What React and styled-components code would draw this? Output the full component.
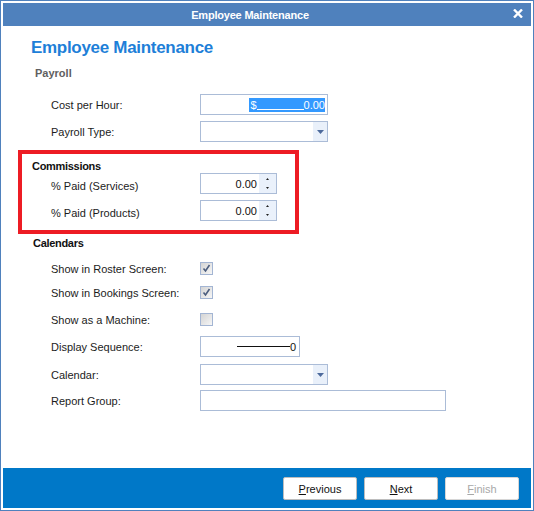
import styled, { createGlobalStyle } from "styled-components";

const GlobalStyle = createGlobalStyle`
  html, body {
    margin: 0;
    padding: 0;
    background: #fff;
  }
  body {
    font-family: "Liberation Sans", Arial, sans-serif;
  }
`;

export default function App() {
  return (
    <>
      <GlobalStyle />
      <Window>
        <TitleBar>
          <TitleText>Employee Maintenance</TitleText>
          <CloseBox>
            <svg width="10" height="9" viewBox="0 0 10 9">
              <path d="M1 0.5 L9 8.5 M9 0.5 L1 8.5" stroke="#fff" strokeWidth="2.4" />
            </svg>
          </CloseBox>
        </TitleBar>

        <Content>
          <Heading>Employee Maintenance</Heading>
          <SubHeading>Payroll</SubHeading>

          <Row $top={14}>
            <Label>Cost per Hour:</Label>
            <TextBox $w={128}>
              <Selected>
                $<Blank $w={47} />0.00
              </Selected>
            </TextBox>
          </Row>
          <Row>
            <Label>Payroll Type:</Label>
            <ComboBox $w={128} />
          </Row>

          <Highlight>
            <SectionTitle $indent={10}>Commissions</SectionTitle>
            <Row $top={0} $indent={29}>
              <Label $low>% Paid (Services)</Label>
              <SpinBox value="0.00" />
            </Row>
            <Row $indent={29}>
              <Label $low>% Paid (Products)</Label>
              <SpinBox value="0.00" />
            </Row>
          </Highlight>

          <SectionTitle $indent={30} $top={3}>Calendars</SectionTitle>
          <Row $top={8}>
            <Label>Show in Roster Screen:</Label>
            <CheckBox checked />
          </Row>
          <Row $top={3}>
            <Label>Show in Bookings Screen:</Label>
            <CheckBox checked />
          </Row>
          <Row>
            <Label>Show as a Machine:</Label>
            <CheckBox />
          </Row>
          <Row>
            <Label>Display Sequence:</Label>
            <TextBox $w={100} $pad={3}>
              <Blank $w={53} />0
            </TextBox>
          </Row>
          <Row $top={7}>
            <Label>Calendar:</Label>
            <ComboBox $w={128} />
          </Row>
          <Row $top={5}>
            <Label>Report Group:</Label>
            <TextBox $w={246} />
          </Row>
        </Content>

        <Footer>
          <Button>
            <u>P</u>revious
          </Button>
          <Button>
            <u>N</u>ext
          </Button>
          <Button disabled>
            <u>F</u>inish
          </Button>
        </Footer>
      </Window>
    </>
  );
}

function ComboBox({ $w }) {
  return (
    <Combo $w={$w}>
      <DropButton>
        <svg width="7" height="4" viewBox="0 0 7 4">
          <path d="M0 0 H7 L3.5 4 Z" fill="#4d6a9c" />
        </svg>
      </DropButton>
    </Combo>
  );
}

function SpinBox({ value }) {
  return (
    <Spin>
      <SpinValue>{value}</SpinValue>
      <SpinButtons>
        <SpinHalf>
          <svg width="3" height="2" viewBox="0 0 3 2">
            <path d="M1.5 0 L3 2 H0 Z" fill="#222" />
          </svg>
        </SpinHalf>
        <SpinHalf>
          <svg width="3" height="2" viewBox="0 0 3 2">
            <path d="M0 0 H3 L1.5 2 Z" fill="#222" />
          </svg>
        </SpinHalf>
      </SpinButtons>
    </Spin>
  );
}

function CheckBox({ checked }) {
  return (
    <Check>
      {checked && (
        <svg width="11" height="11" viewBox="0 0 11 11">
          <path d="M2.5 5.5 L4.5 8 L8.5 2" stroke="#4b5d7e" strokeWidth="1.6" fill="none" />
        </svg>
      )}
    </Check>
  );
}

const frameBlue = "#4f81bd";
const fieldBorder = "#abbcd7";
const footerBlue = "#0078c8";

const Window = styled.div`
  box-sizing: border-box;
  width: 534px;
  height: 511px;
  border: 1px solid ${frameBlue};
  padding: 2px;
  display: flex;
  flex-direction: column;
  background: #fff;
`;

const TitleBar = styled.div`
  display: flex;
  align-items: center;
  height: 23px;
  background: ${frameBlue};
  color: #fff;
`;

const TitleText = styled.div`
  flex: 1;
  text-align: center;
  font-size: 11px;
  font-weight: bold;
  letter-spacing: -0.2px;
`;

const CloseBox = styled.div`
  width: 34px;
  display: flex;
  justify-content: flex-end;
  padding-right: 8px;
  box-sizing: border-box;
  margin-top: -2px;
`;

const Content = styled.div`
  flex: 1;
  display: flex;
  flex-direction: column;
`;

const Heading = styled.div`
  margin: 11px 0 0 28px;
  font-size: 17px;
  line-height: 22px;
  font-weight: bold;
  letter-spacing: -0.3px;
  color: #1e7fd8;
`;

const SubHeading = styled.div`
  margin: 7px 0 0 32px;
  font-size: 11px;
  line-height: 14px;
  font-weight: bold;
  color: #5f5f5f;
`;

const SectionTitle = styled.div`
  margin: ${({ $top }) => $top ?? 0}px 0 0 ${({ $indent }) => $indent}px;
  font-size: 11px;
  line-height: 13px;
  font-weight: bold;
  letter-spacing: -0.3px;
  color: #111;
`;

const Highlight = styled.div`
  box-sizing: border-box;
  width: 281px;
  margin: 8px 0 0 15px;
  border: 4px solid #ed1c24;
  padding: 6px 0 9px;
`;

const Row = styled.div`
  display: flex;
  align-items: center;
  height: 21px;
  margin-top: ${({ $top }) => $top ?? 6}px;
  padding-left: ${({ $indent }) => $indent ?? 48}px;
`;

const Label = styled.div`
  width: 149px;
  flex-shrink: 0;
  font-size: 11px;
  padding-top: ${({ $low }) => ($low ? 4 : 1)}px;
  color: #1c1c1c;
`;

const TextBox = styled.div`
  box-sizing: border-box;
  width: ${({ $w }) => $w}px;
  height: 21px;
  border: 1px solid ${fieldBorder};
  background: #fff;
  display: flex;
  align-items: center;
  justify-content: flex-end;
  padding-right: ${({ $pad }) => $pad ?? 2}px;
  font-size: 11px;
  color: #111;
`;

const Selected = styled.span`
  background: #3399ff;
  color: #fff;
  line-height: 14px;
  padding: 0 0 0 1px;
`;

const Blank = styled.span`
  display: inline-block;
  width: ${({ $w }) => $w}px;
  height: 1px;
  background: currentColor;
  vertical-align: -1px;
`;

const Combo = styled.div`
  box-sizing: border-box;
  width: ${({ $w }) => $w}px;
  height: 21px;
  border: 1px solid ${fieldBorder};
  background: #fff;
  display: flex;
  justify-content: flex-end;
`;

const DropButton = styled.div`
  width: 14px;
  background: #e9f0fa;
  display: flex;
  align-items: center;
  justify-content: center;
  padding-top: 1px;
`;

const Spin = styled.div`
  box-sizing: border-box;
  width: 77px;
  height: 21px;
  border: 1px solid ${fieldBorder};
  background: #fff;
  display: flex;
`;

const SpinValue = styled.div`
  flex: 1;
  display: flex;
  align-items: center;
  justify-content: flex-end;
  font-size: 11px;
  color: #111;
  padding-right: 2px;
`;

const SpinButtons = styled.div`
  width: 17px;
  display: flex;
  flex-direction: column;
  background: #eaf1fb;
`;

const SpinHalf = styled.div`
  flex: 1;
  display: flex;
  align-items: center;
  justify-content: center;
`;

const Check = styled.div`
  box-sizing: border-box;
  width: 13px;
  height: 13px;
  border: 1px solid #a3b5d3;
  background: linear-gradient(135deg, #d4d4d4, #f6f6f6);
  display: flex;
  align-items: center;
  justify-content: center;
`;

const Footer = styled.div`
  height: 40px;
  flex-shrink: 0;
  background: ${footerBlue};
  display: flex;
  align-items: center;
  justify-content: flex-end;
  gap: 7px;
  padding-right: 12px;
`;

const Button = styled.button`
  box-sizing: border-box;
  width: 74px;
  height: 23px;
  border: 1px solid ${({ disabled }) => (disabled ? "#d6d6d6" : "#bdbdbd")};
  border-radius: 2px;
  background: #fff;
  font-family: "Liberation Sans", Arial, sans-serif;
  font-size: 11px;
  color: ${({ disabled }) => (disabled ? "#a8a8a8" : "#111")};
  padding: 0;
  margin-top: 1px;
`;
